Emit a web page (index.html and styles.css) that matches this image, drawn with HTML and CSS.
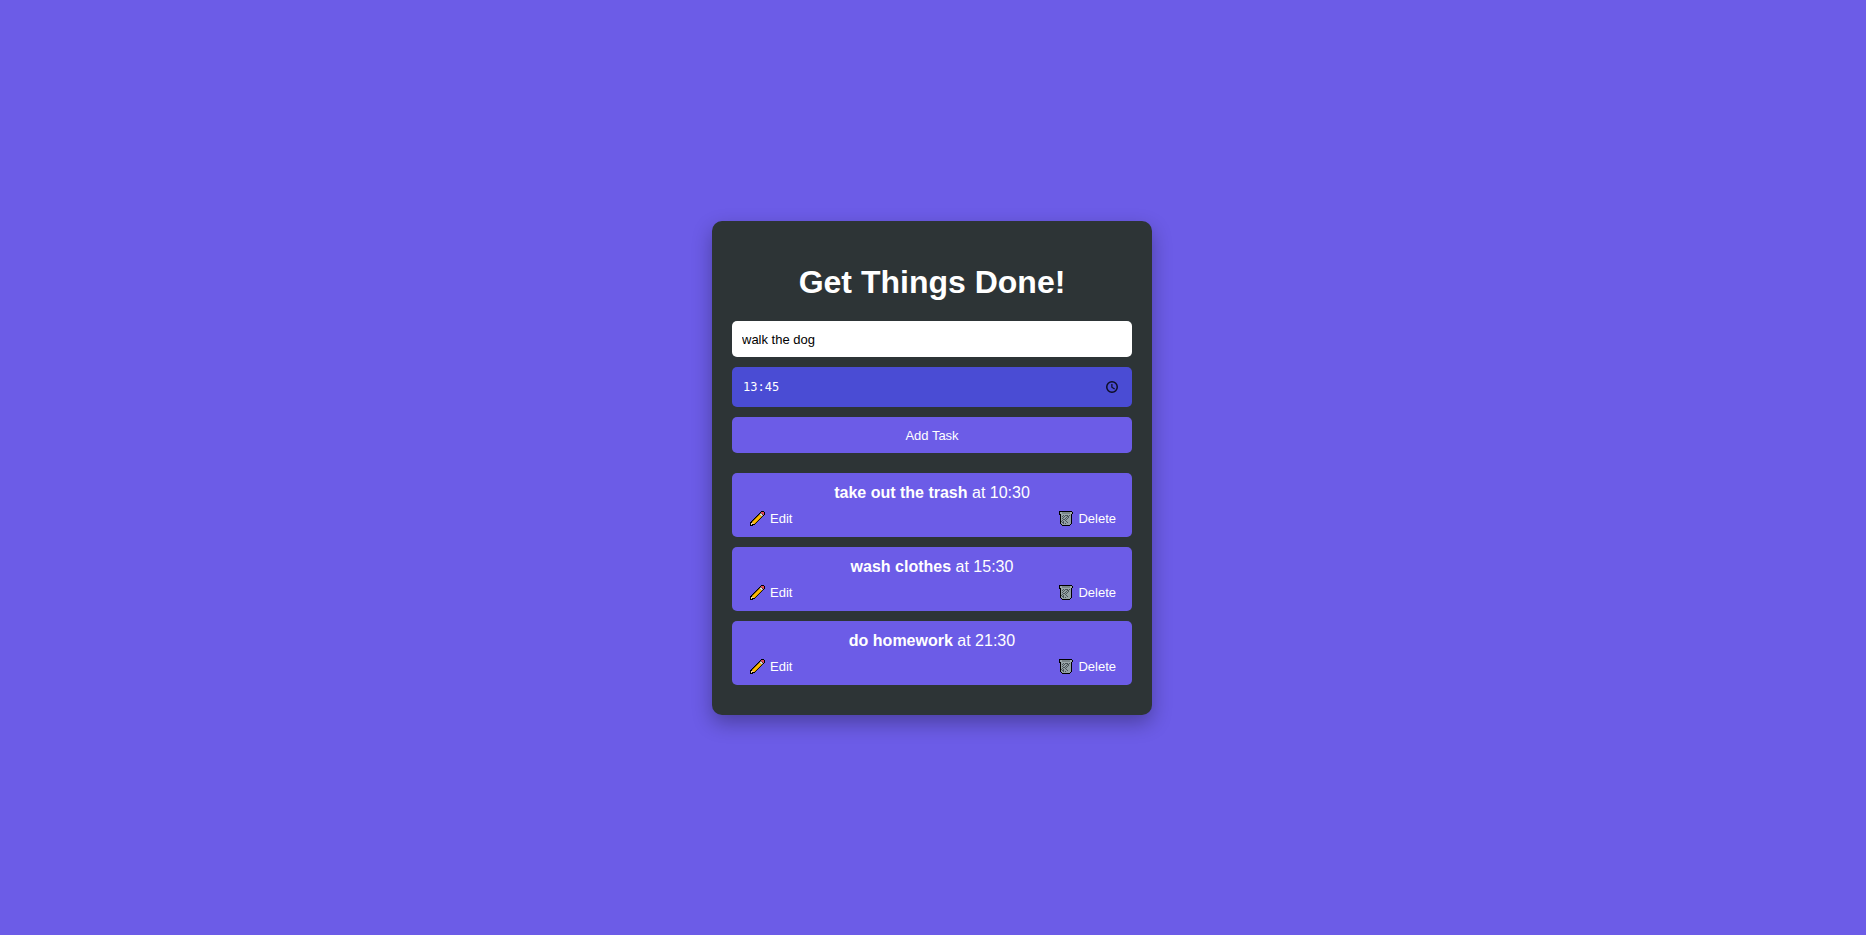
FILE: index.html
```html
<!DOCTYPE html>
<html lang="en">
<head>
<meta charset="utf-8">
<title>Get Things Done!</title>
<link rel="stylesheet" href="styles.css">
</head>
<body>
<svg class="sprite" aria-hidden="true">
  <symbol id="pencil" viewBox="0 0 16 16">
    <path d="M0 15V11H1V10H2V9H3V8H4V7H5V6H6V5H7V4H8V3H9V2H10V1H11V0H14V1H15V4H14V5H13V6H12V7H11V8H10V9H9V10H8V11H7V12H6V13H5V14H3V15Z" fill="#000"/>
    <path d="M2 11L9.500 3.500L12 5.500L4.500 13L3 13Z" fill="#ffb900"/>
    <path d="M1 12H2V11L4 13H2V14H1Z" fill="#f3d1a5"/>
    <path d="M9.500 3.500L11 2L13 4.500L12 5.500Z" fill="#e0e4e8"/>
    <path d="M11 2V1H14V4H13V3.500Z" fill="#e74856"/>
  </symbol>
  <symbol id="trash" viewBox="0 0 16 16">
    <path d="M1 0H14V1H15V3H14V4H14V13H13V14H12V15H4V14H3V13H2V4H1V1H1Z" fill="#000"/>
    <path d="M2 1H14V3H13V4H3V3H2Z" fill="#9ba8ab"/>
    <path d="M4 1.500H12V2.500H4Z" fill="#5a666b"/>
    <path d="M3 4H13V13H12V14H4V13H3Z" fill="#93a0a4"/>
    <path d="M5 4h1v1h-1zM7 4h3v1h-3zM11 4h1v1h-1zM4 5h1v1h-1zM6 5h1v1h-1zM9 5h2v1h-2zM5 6h1v1h-1zM8 6h1v1h-1zM10 6h1v1h-1zM4 7h1v1h-1zM7 7h1v1h-1zM9 7h1v1h-1zM5 8h2v1h-2zM8 8h1v1h-1zM4 9h1v1h-1zM7 9h1v1h-1zM3 10h1v1h-1zM5 10h1v1h-1zM8 10h1v1h-1zM4 11h2v1h-2zM9 11h1v1h-1zM5 12h1v1h-1zM7 12h1v1h-1z" fill="#4a5459"/>
  </symbol>
</svg>
<main class="card">
  <h1 class="title">Get Things Done!</h1>
  <form class="form">
    <input class="field" type="text" value="walk the dog" aria-label="Task">
    <div class="time">
      <input class="time-input" type="text" inputmode="numeric" value="13:45" aria-label="Time">
      <button class="time-button" type="button" aria-label="Pick a time">
        <svg class="clock" viewBox="0 0 24 24" aria-hidden="true"><path d="M12 0A12 12 0 1 0 12 24A12 12 0 1 0 12 0ZM12 21A9 9 0 1 1 12 3A9 9 0 1 1 12 21ZM13 6H10.500V13.200L16.500 17L18 15L13 12Z"/></svg>
      </button>
    </div>
    <button class="add" type="button">Add Task</button>
  </form>
  <ul class="list">
    <li class="item">
      <div class="label"><strong>take out the trash</strong> at 10:30</div>
      <div class="actions">
        <button class="action" type="button"><svg class="icon" aria-hidden="true"><use href="#pencil"/></svg>Edit</button>
        <button class="action" type="button"><svg class="icon" aria-hidden="true"><use href="#trash"/></svg>Delete</button>
      </div>
    </li>
    <li class="item">
      <div class="label"><strong>wash clothes</strong> at 15:30</div>
      <div class="actions">
        <button class="action" type="button"><svg class="icon" aria-hidden="true"><use href="#pencil"/></svg>Edit</button>
        <button class="action" type="button"><svg class="icon" aria-hidden="true"><use href="#trash"/></svg>Delete</button>
      </div>
    </li>
    <li class="item">
      <div class="label"><strong>do homework</strong> at 21:30</div>
      <div class="actions">
        <button class="action" type="button"><svg class="icon" aria-hidden="true"><use href="#pencil"/></svg>Edit</button>
        <button class="action" type="button"><svg class="icon" aria-hidden="true"><use href="#trash"/></svg>Delete</button>
      </div>
    </li>
  </ul>
</main>
</body>
</html>
```
FILE: styles.css
```css
* {
  box-sizing: border-box;
}

body {
  margin: 0;
  padding-right: 2px;
  min-height: 100vh;
  display: flex;
  justify-content: center;
  align-items: center;
  background: #6c5ce7;
  color: #fff;
  font-family: Arial, "Liberation Sans", sans-serif;
  font-size: 16px;
}

.sprite {
  display: none;
}

.card {
  width: 100%;
  max-width: 440px;
  padding: 20px 20px 30px;
  border-radius: 10px;
  background: #2d3436;
  box-shadow: 0 8px 20px rgba(0, 0, 0, 0.3);
  text-align: center;
}

.title {
  margin: 23px 0 20px;
  font-size: 32px;
  line-height: 37px;
}

.form,
.list {
  display: flex;
  flex-direction: column;
  gap: 10px;
}

.field,
.time,
.add {
  width: 100%;
  height: 36px;
  border: 0;
  border-radius: 5px;
  font-family: inherit;
  font-size: 13px;
}

.field,
.add {
  padding: 2px 10px 0;
}

.field {
  background: #fff;
  color: #000;
}

.time {
  display: flex;
  align-items: center;
  height: 40px;
  padding: 0 10px;
  background: #4a4cd4;
}

.time-input {
  flex: 1;
  min-width: 0;
  padding: 0 1px;
  border: 0;
  background: transparent;
  color: #fff;
  font-family: "DejaVu Sans Mono", monospace;
  font-size: 12px;
}

.time-button {
  display: flex;
  padding: 4px;
  border: 0;
  background: transparent;
}

.clock {
  width: 12px;
  height: 12px;
  fill: #0c0d24;
}

.add {
  background: #6c5ce7;
  color: #fff;
}

.list {
  margin: 20px 0 0;
  padding: 0;
  list-style: none;
}

.item {
  padding: 11px 10px 10px;
  border-radius: 5px;
  background: #6c5ce7;
}

.label {
  line-height: 18px;
}

.actions {
  display: flex;
  justify-content: space-between;
  padding: 9px 6px 0 8px;
}

.action {
  display: flex;
  align-items: center;
  gap: 4px;
  padding: 0;
  border: 0;
  background: transparent;
  color: #fff;
  font-family: inherit;
  font-size: 13px;
  line-height: 16px;
}

.icon {
  width: 16px;
  height: 16px;
}
```
